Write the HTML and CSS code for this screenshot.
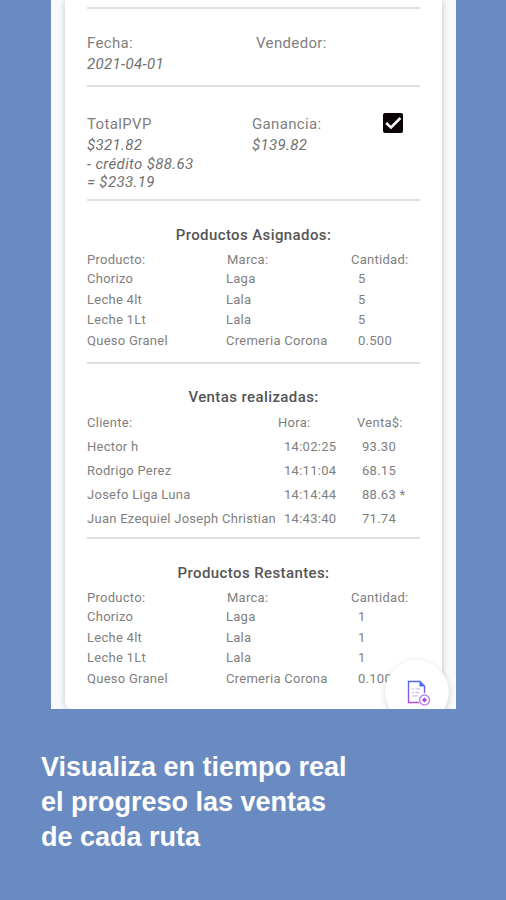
FILE: index.html
```
<!DOCTYPE html>
<html lang="es">
  <head>
    <meta charset="UTF-8" />
    <meta name="viewport" content="width=device-width, initial-scale=1.0" />
    <title>Ventas por ruta</title>
    <link rel="stylesheet" href="styles.css">
  </head>
  <body>
    <main class="screen">
      <div class="card">
        <section class="info info--date">
          <div class="info__col">
            <p class="label">Fecha:</p>
            <p class="value">2021-04-01</p>
          </div>
          <div class="info__col">
            <p class="label">Vendedor:</p>
          </div>
        </section>
        <section class="info info--total">
          <div class="info__col">
            <p class="label">TotalPVP</p>
            <p class="value">$321.82</p>
            <p class="value">- crédito $88.63</p>
            <p class="value">= $233.19</p>
          </div>
          <div class="info__col">
            <p class="label">Ganancia:</p>
            <p class="value">$139.82</p>
          </div>
          <svg class="check" viewBox="0 0 20 20">
            <rect width="20" height="20" rx="2" fill="#0b0307" />
            <path d="M3.2 10 L8 14.400 L17.400 5" fill="none" stroke="#fff" stroke-width="2.5" />
          </svg>
        </section>
        <section class="products">
          <h2 class="title">Productos Asignados:</h2>
          <div class="row row--head"><span>Producto:</span><span>Marca:</span><span>Cantidad:</span></div>
          <div class="row"><span>Chorizo</span><span>Laga</span><span>5</span></div>
          <div class="row"><span>Leche 4lt</span><span>Lala</span><span>5</span></div>
          <div class="row"><span>Leche 1Lt</span><span>Lala</span><span>5</span></div>
          <div class="row"><span>Queso Granel</span><span>Cremeria Corona</span><span>0.500</span></div>
        </section>
        <section class="sales">
          <h2 class="title">Ventas realizadas:</h2>
          <div class="row row--head"><span>Cliente:</span><span>Hora:</span><span>Venta$:</span></div>
          <div class="row"><span>Hector h</span><span>14:02:25</span><span>93.30</span></div>
          <div class="row"><span>Rodrigo Perez</span><span>14:11:04</span><span>68.15</span></div>
          <div class="row"><span>Josefo Liga Luna</span><span>14:14:44</span><span>88.63 *</span></div>
          <div class="row"><span>Juan Ezequiel Joseph Christian</span><span>14:43:40</span><span>71.74</span></div>
        </section>
        <section class="products">
          <h2 class="title">Productos Restantes:</h2>
          <div class="row row--head"><span>Producto:</span><span>Marca:</span><span>Cantidad:</span></div>
          <div class="row"><span>Chorizo</span><span>Laga</span><span>1</span></div>
          <div class="row"><span>Leche 4lt</span><span>Lala</span><span>1</span></div>
          <div class="row"><span>Leche 1Lt</span><span>Lala</span><span>1</span></div>
          <div class="row"><span>Queso Granel</span><span>Cremeria Corona</span><span>0.100</span></div>
        </section>
      </div>
      <button class="fab">
        <svg class="fab__icon" viewBox="0 0 24 27">
          <defs>
            <linearGradient id="ink" x1="0" y1="0" x2="0" y2="27" gradientUnits="userSpaceOnUse">
              <stop offset="0" stop-color="#4a6cf0" />
              <stop offset="1" stop-color="#c044e0" />
            </linearGradient>
          </defs>
          <g fill="none" stroke="url(#ink)" stroke-width="1.4">
            <path d="M12 22.500 H1.500 V1.500 H13 L17.500 6 V13" />
            <path d="M5 9 H7 M8.500 9 H13 M5 12.500 H7 M8.500 12.500 H12 M5 16 H11" stroke-width="1" opacity="0.5" />
            <circle cx="17.500" cy="20" r="5" stroke-width="1.400" opacity="0.7" />
          </g>
          <path d="M12.500 1.500 L17.500 6.500 H12.500 Z" fill="#4a6cf0" />
          <path d="M17.500 17.500 L20 20 L17.500 22.500 L15 20 Z" fill="#b040e0" />
        </svg>
      </button>
    </main>
    <p class="caption">Visualiza en tiempo real<br>el progreso las ventas<br>de cada ruta</p>
  </body>
</html>
```
FILE: styles.css
```
* {
  box-sizing: border-box;
}
body {
  margin: 0;
  height: 900px;
  overflow: hidden;
  background-color: #6a8bc1;
  font-family: Roboto, sans-serif;
  color: #808080;
}
p {
  margin: 0;
}
.screen {
  position: relative;
  width: 405px;
  height: 709px;
  margin-left: 51px;
  padding: 0 14px;
  overflow: hidden;
  background-color: #f8f9fa;
}
.card {
  height: 709px;
  padding: 7px 22px 0;
  background-color: #fff;
  border-radius: 0 0 7px 7px;
  box-shadow: 0 0 6px rgba(0, 0, 0, 0.22);
}
section {
  border-top: 2px solid #e0e0e0;
}
.info {
  display: grid;
  font-size: 15px;
  letter-spacing: 0.35px;
}
.info--date {
  grid-template-columns: 169px 1fr;
  height: 78px;
  padding-top: 24px;
}
.info--total {
  grid-template-columns: 165px 130px 1fr;
  height: 114px;
  padding-top: 27px;
}
.label {
  height: 22px;
  line-height: 20px;
}
.value {
  line-height: 18.5px;
  font-style: italic;
  color: #707070;
}
.check {
  width: 20px;
  height: 20px;
  margin: -1px 0 0 1px;
}
.title {
  margin: 0;
  line-height: 24px;
  text-align: center;
  font-size: 15px;
  font-weight: 500;
  letter-spacing: 0.4px;
  color: #555;
}
.row {
  display: grid;
  font-size: 13px;
  letter-spacing: 0.27px;
  white-space: nowrap;
}
.products {
  height: 163px;
  padding-top: 22px;
}
.products .row {
  grid-template-columns: 139px 132px 1fr;
  line-height: 20.5px;
}
.products .row--head {
  grid-template-columns: 140px 124px 1fr;
  margin-top: 4px;
  line-height: 18px;
}
.sales {
  height: 175px;
  padding-top: 21px;
}
.sales .row {
  grid-template-columns: 197px 78px 1fr;
  line-height: 24px;
}
.sales .row--head {
  grid-template-columns: 191px 79px 1fr;
  margin-top: 2px;
}
/* floating button, cut by the bottom of the screen */
.fab {
  position: absolute;
  left: 334px;
  top: 660px;
  width: 64px;
  height: 64px;
  padding: 0;
  border: 0;
  border-radius: 50%;
  background-color: #fff;
  box-shadow: 0 2px 6px rgba(0, 0, 0, 0.16);
}
.fab__icon {
  display: block;
  width: 24px;
  height: 27px;
  margin: 2px 0 0 22px;
}
.caption {
  margin: 41px 0 0 41px;
  font: bold 27px/35px "Liberation Sans", Arial, sans-serif;
  color: #fff;
}
```
